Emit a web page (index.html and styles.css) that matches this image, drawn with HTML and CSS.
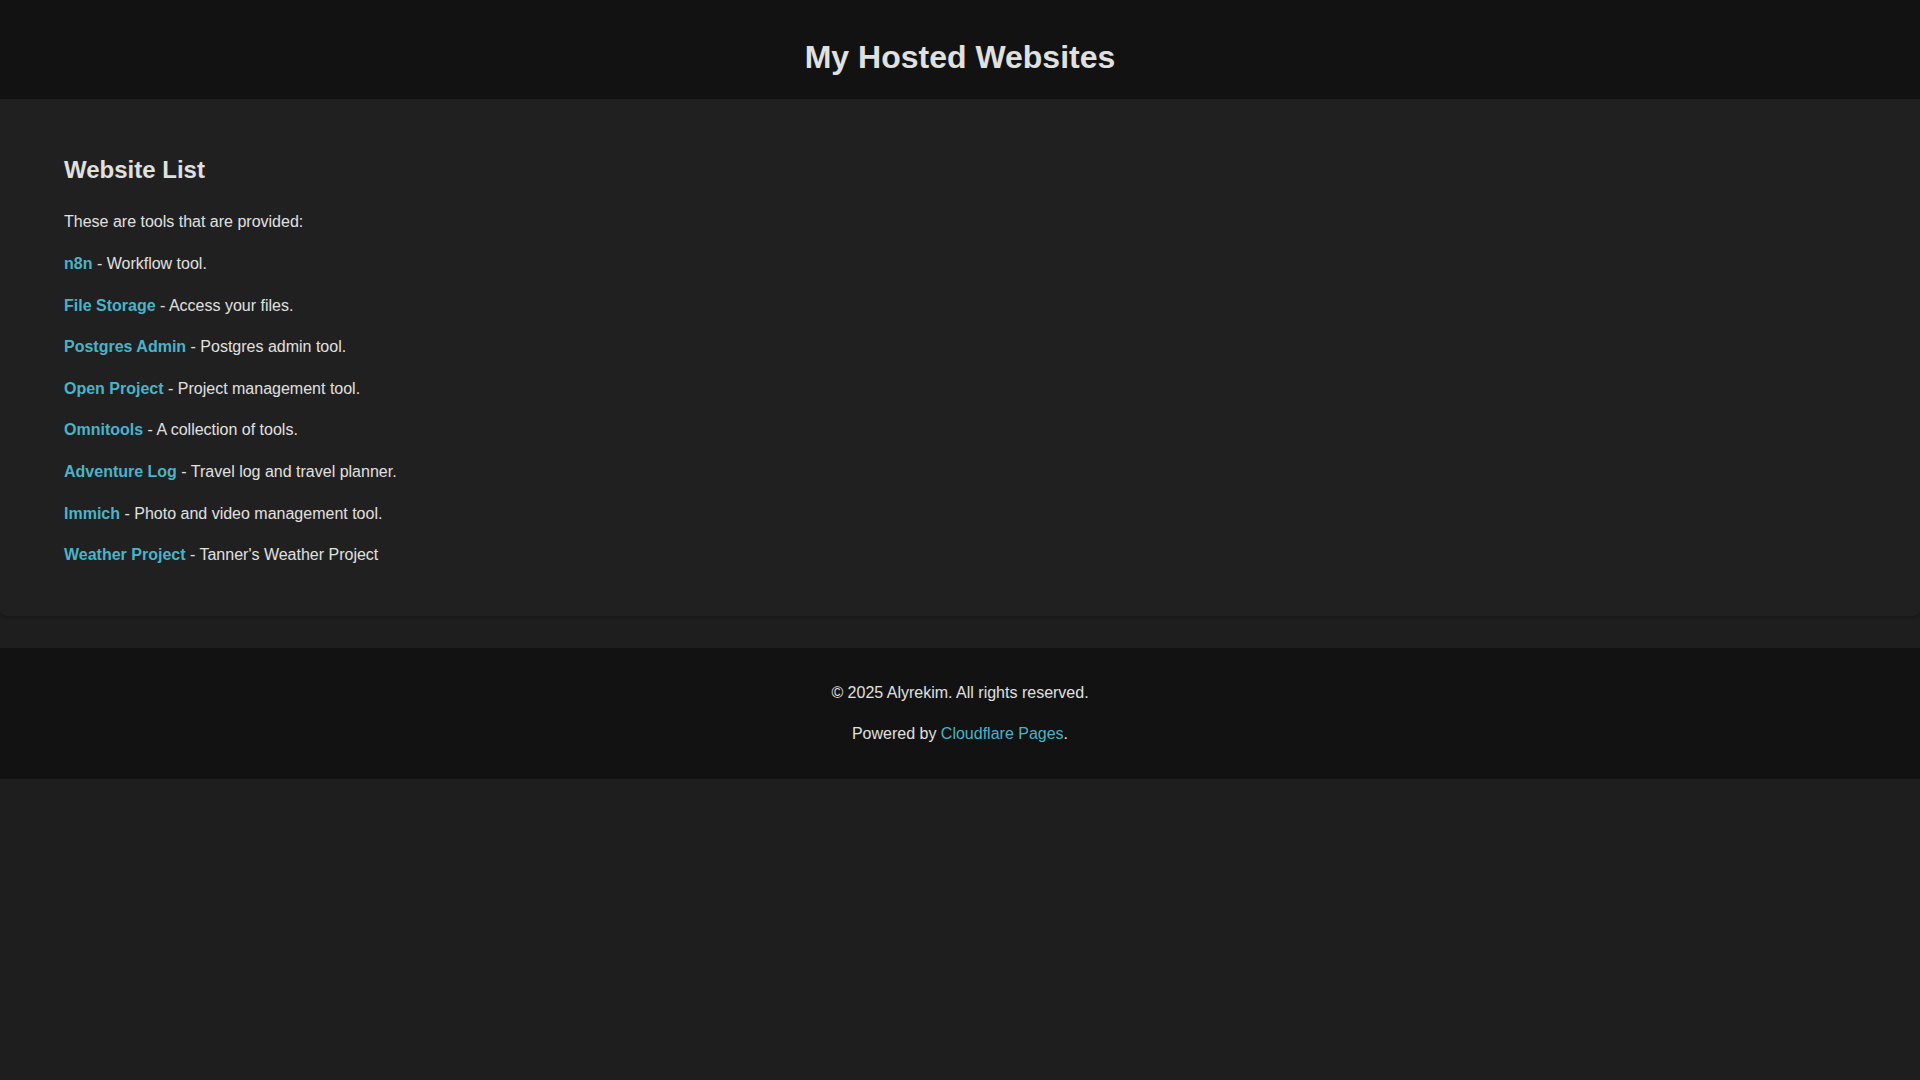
FILE: index.html
```html
<!DOCTYPE html>
<html lang="en">
<head>
<meta charset="utf-8">
<title>My Hosted Websites</title>
<link rel="stylesheet" href="styles.css">
</head>
<body>
<header class="site-header">
  <h1 class="site-title">My Hosted Websites</h1>
</header>
<main class="site-main">
  <section class="card">
    <h2 class="card-title">Website List</h2>
    <p>These are tools that are provided:</p>
    <p><a href="#">n8n</a> - Workflow tool.</p>
    <p><a href="#">File Storage</a> - Access your files.</p>
    <p><a href="#">Postgres Admin</a> - Postgres admin tool.</p>
    <p><a href="#">Open Project</a> - Project management tool.</p>
    <p><a href="#">Omnitools</a> - A collection of tools.</p>
    <p><a href="#">Adventure Log</a> - Travel log and travel planner.</p>
    <p><a href="#">Immich</a> - Photo and video management tool.</p>
    <p><a href="#">Weather Project</a> - Tanner's Weather Project</p>
  </section>
</main>
<footer class="site-footer">
  <p>&copy; 2025 Alyrekim. All rights reserved.</p>
  <p>Powered by <a class="plain-link" href="#">Cloudflare Pages</a>.</p>
</footer>
</body>
</html>
```
FILE: styles.css
```css
html, body {
  margin: 0;
  padding: 0;
  background: #1e1e1e;
  color: #e0e0e0;
  font-family: "Liberation Sans", Arial, sans-serif;
  font-size: 16px;
  line-height: 1.6;
}

.site-header {
  background: #121212;
  height: 99px;
  box-sizing: border-box;
  padding-top: 39px;
  text-align: center;
}

.site-title {
  margin: 0;
  font-size: 32px;
  line-height: 37px;
  font-weight: bold;
  color: #e0e0e0;
}

.site-main {
  padding-bottom: 32px;
}

.card {
  background: #202020;
  padding: 32px 64px;
  border-radius: 0 0 6px 6px;
  box-shadow: 0 2px 3px rgba(0, 0, 0, 0.2);
}

.card-title {
  font-size: 24px;
  line-height: 1.6;
  margin: 20px 0;
  color: #e0e0e0;
}

p {
  margin: 16px 0;
}

.card a {
  color: #4ab3c8;
  font-weight: bold;
  text-decoration: none;
}

.site-footer {
  background: #121212;
  padding: 16px 0;
  text-align: center;
  color: #e0e0e0;
}

.site-footer .plain-link {
  color: #4ab3c8;
  text-decoration: none;
}
```
